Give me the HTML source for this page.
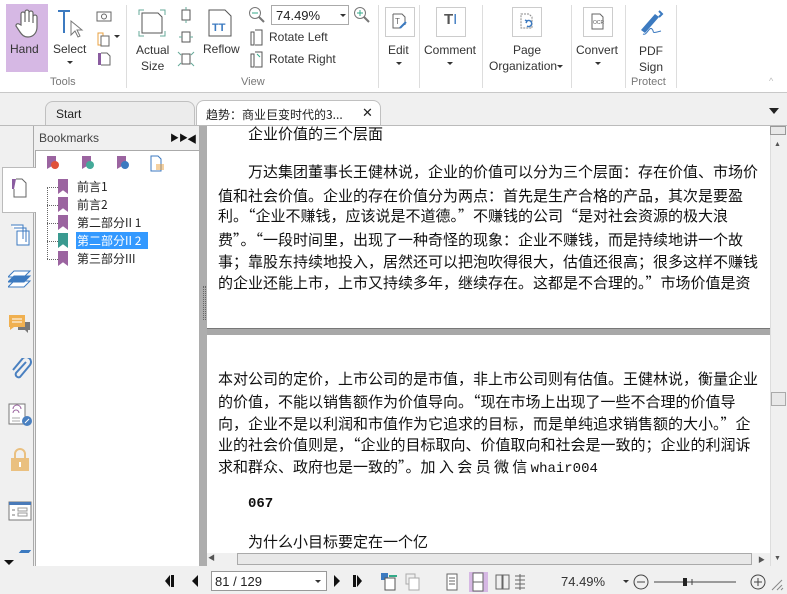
<!DOCTYPE html>
<html><head><meta charset="utf-8"><style>
*{margin:0;padding:0;box-sizing:border-box}
body{width:787px;height:594px;overflow:hidden;background:#f0f0f0;font-family:"Liberation Sans","Noto Sans CJK SC",sans-serif;font-size:12px;color:#222;position:relative}
.a{position:absolute}
.lbl{position:absolute;font-size:12px;color:#333;text-align:center;white-space:nowrap}
.grp{position:absolute;top:76px;font-size:11px;color:#777}
.sep{position:absolute;top:5px;width:1px;height:83px;background:#ddd}
.tx{position:absolute;left:218px;font-size:15px;white-space:nowrap;color:#111;font-family:"Noto Sans CJK SC","WenQuanYi Zen Hei",sans-serif;line-height:20px}
.box{position:absolute;width:30px;height:30px;border:1px solid #ccc;background:#fff}
.tri{position:absolute;width:0;height:0;border-left:3px solid transparent;border-right:3px solid transparent;border-top:3px solid #333}
.bm{position:absolute;left:58px;width:10px;height:15px;background:#9b64a0;clip-path:polygon(0 0,100% 0,100% 100%,50% 75%,0 100%)}
.bt{position:absolute;left:77px;font-size:12px;font-family:"Noto Sans CJK SC",sans-serif;line-height:16px}
</style></head><body>
<div class="a" style="left:0;top:0;width:787px;height:93px;background:#fff;border-bottom:1px solid #c8c8c8"></div>
<div class="a" style="left:6px;top:4px;width:42px;height:68px;background:#d6b8e4"></div>
<svg class="a" style="left:14px;top:8px" width="26" height="30" viewBox="0 0 26 30"><path d="M7 17V6a2 2 0 0 1 4 0v8V4a2 2 0 0 1 4 0v10V5a2 2 0 0 1 4 0v10V9a2 2 0 0 1 4 0v10c0 6-4 10-9 10-4 0-6-2-8-5l-4-6a2 2 0 0 1 3-2z" fill="#fff" stroke="#666" stroke-width="1.2"/></svg>
<div class="lbl" style="left:10px;top:42px">Hand</div>
<svg class="a" style="left:56px;top:9px" width="30" height="30"><path d="M2 2h12M8 2v22" stroke="#3c7ac0" stroke-width="2" fill="none"/><path d="M15 12l0 14 4-4 3 6 2-1-3-6 5 0z" fill="#fff" stroke="#777"/></svg>
<div class="lbl" style="left:53px;top:42px">Select</div><div class="tri" style="left:67px;top:61px"></div>
<svg class="a" style="left:95px;top:9px" width="18" height="60"><rect x="2" y="3" width="14" height="9" fill="none" stroke="#666"/><circle cx="9" cy="7.5" r="2.5" fill="none" stroke="#666"/><rect x="3" y="24" width="5" height="12" fill="none" stroke="#e8a040"/><rect x="6" y="27" width="8" height="10" fill="#fff" stroke="#666"/><rect x="3" y="44" width="3" height="12" fill="#8a5ca0"/><path d="M6 44h6l3 3v9H6" fill="#fff" stroke="#666"/></svg>
<div class="tri" style="left:114px;top:35px"></div>
<div class="grp" style="left:50px">Tools</div>
<div class="sep" style="left:126px"></div>
<svg class="a" style="left:137px;top:8px" width="30" height="30"><path d="M2 7V2h5M23 2h5v5M28 23v5h-5M7 28H2v-5" stroke="#6a9" fill="none"/><path d="M5 5h16l4 4v16H5z" fill="#fff" stroke="#555"/></svg>
<div class="lbl" style="left:136px;top:42px;line-height:16px">Actual<br>Size</div>
<svg class="a" style="left:177px;top:7px" width="18" height="60"><rect x="5" y="3" width="8" height="10" fill="none" stroke="#555"/><path d="M9 0v3M9 13v3" stroke="#6a9"/><rect x="5" y="25" width="8" height="10" fill="none" stroke="#555"/><path d="M2 30h3M13 30h3" stroke="#6a9"/><rect x="5" y="47" width="8" height="10" fill="none" stroke="#555"/><path d="M1 45l3 3M17 45l-3 3M1 59l3-3M17 59l-3-3" stroke="#6a9"/></svg>
<svg class="a" style="left:208px;top:9px" width="24" height="28"><path d="M1 1h16l6 6v20H1z" fill="#fff" stroke="#555"/><text x="4" y="22" font-size="11" font-weight="bold" fill="#3c7ac0" font-family="Liberation Sans">TT</text></svg>
<div class="lbl" style="left:203px;top:42px">Reflow</div>
<svg class="a" style="left:248px;top:6px" width="18" height="18"><circle cx="7" cy="7" r="5.5" fill="none" stroke="#777"/><path d="M4 7h6" stroke="#3a8"/><path d="M11 11l5 5" stroke="#777" stroke-width="2"/></svg>
<div class="a" style="left:271px;top:5px;width:78px;height:20px;border:1px solid #aaa;background:#fff;font-size:13px;padding:2px 0 0 4px">74.49%</div>
<div class="tri" style="left:340px;top:14px"></div>
<svg class="a" style="left:353px;top:6px" width="18" height="18"><circle cx="7" cy="7" r="5.5" fill="none" stroke="#777"/><path d="M4 7h6M7 4v6" stroke="#3a8"/><path d="M11 11l5 5" stroke="#777" stroke-width="2"/></svg>
<svg class="a" style="left:249px;top:28px" width="16" height="40"><path d="M2 4h3v13H2zM6 2h7v15H6" fill="none" stroke="#555"/><path d="M2 26h3v13H2zM6 24h7v15H6" fill="none" stroke="#555"/><path d="M8 26l3 3" stroke="#3a8"/></svg>
<div class="lbl" style="left:269px;top:30px">Rotate Left</div>
<div class="lbl" style="left:269px;top:52px">Rotate Right</div>
<div class="grp" style="left:241px">View</div>
<div class="sep" style="left:378px"></div>
<div class="box" style="left:385px;top:7px"></div>
<svg class="a" style="left:391px;top:13px" width="18" height="18"><path d="M2 1h9l3 3v8M2 1v14h7" fill="none" stroke="#666"/><text x="4" y="11" font-size="8" fill="#666">T</text><path d="M9 15l6-6" stroke="#3c7ac0" stroke-width="2"/></svg>
<div class="lbl" style="left:388px;top:43px">Edit</div><div class="tri" style="left:396px;top:62px"></div>
<div class="sep" style="left:419px"></div>
<div class="box" style="left:436px;top:7px"></div>
<div class="a" style="left:444px;top:11px;font-size:15px;font-weight:bold;color:#555">T<span style="color:#3c7ac0;font-weight:normal">I</span></div>
<div class="lbl" style="left:424px;top:43px">Comment</div><div class="tri" style="left:447px;top:62px"></div>
<div class="sep" style="left:482px"></div>
<div class="box" style="left:512px;top:7px"></div>
<svg class="a" style="left:519px;top:13px" width="18" height="18"><path d="M2 1h8l3 3v11H2z" fill="none" stroke="#888" stroke-dasharray="2 1"/><path d="M8 8a3 3 0 1 1 0 5M6 7l2 1-1 2" fill="none" stroke="#3c7ac0" stroke-width="1.5"/></svg>
<div class="lbl" style="left:513px;top:43px">Page</div>
<div class="lbl" style="left:489px;top:59px">Organization</div><div class="tri" style="left:557px;top:65px"></div>
<div class="sep" style="left:571px"></div>
<div class="box" style="left:583px;top:7px"></div>
<svg class="a" style="left:590px;top:13px" width="16" height="18"><path d="M2 1h8l3 3v12H2z" fill="none" stroke="#666"/><text x="3" y="11" font-size="5" fill="#555">OCR</text></svg>
<div class="lbl" style="left:576px;top:43px">Convert</div><div class="tri" style="left:595px;top:62px"></div>
<div class="sep" style="left:625px"></div>
<svg class="a" style="left:635px;top:8px" width="30" height="30"><path d="M6 22L20 6l4 3L10 25z" fill="#3c7ac0"/><path d="M24 3l3 3-3 3" stroke="#3c7ac0" fill="none" stroke-width="2"/><path d="M8 26c4 2 6-8 9-5s-2 5 9 2" fill="none" stroke="#3c7ac0"/></svg>
<div class="lbl" style="left:639px;top:43px;line-height:16px">PDF<br>Sign</div>
<div class="grp" style="left:631px">Protect</div>
<div class="sep" style="left:676px"></div>
<div class="a" style="left:769px;top:76px;font-size:9px;color:#bbb">^</div>
<div class="a" style="left:45px;top:101px;width:150px;height:24px;border:1px solid #c0c0c0;border-bottom:none;border-radius:8px 8px 0 0;background:#ececec"></div>
<div class="a" style="left:56px;top:107px;font-size:12px">Start</div>
<div class="a" style="left:196px;top:100px;width:185px;height:26px;border:1px solid #c0c0c0;border-bottom:none;border-radius:8px 8px 0 0;background:#fff"></div>
<div class="a" style="left:206px;top:107px;font-size:12px;font-family:'Noto Sans CJK SC',sans-serif;line-height:15px">趋势：商业巨变时代的3...</div>
<div class="a" style="left:362px;top:105px;font-size:13px">✕</div>
<div class="a" style="left:769px;top:108px;border-left:5px solid transparent;border-right:5px solid transparent;border-top:6px solid #222"></div>
<div class="a" style="left:0;top:125px;width:787px;height:1px;background:#bbb"></div>
<div class="a" style="left:0;top:126px;width:34px;height:440px;background:#f0f0f0;border-right:1px solid #aaa"></div>
<div class="a" style="left:2px;top:167px;width:34px;height:46px;background:#fff;border:1px solid #bbb;border-right:none"></div>
<svg class="a" style="left:10px;top:177px" width="20" height="24"><rect x="2" y="2" width="4" height="10" fill="#8a5ca0"/><path d="M6 2h6l4 4v14H4V12" fill="#fff" stroke="#666"/></svg>
<svg class="a" style="left:9px;top:223px" width="22" height="24"><path d="M2 2h12v14M5 5h12v14M8 8h12v14H8z" fill="#fff" stroke="#3c7ac0"/></svg>
<svg class="a" style="left:8px;top:270px" width="24" height="20"><path d="M6 1h16l-6 6H0zM6 6h16l-6 6H0zM6 11h16l-6 6H0z" fill="#fff" stroke="#3c7ac0"/><path d="M6 6h16l-6 6H0z" fill="#3c7ac0"/></svg>
<svg class="a" style="left:8px;top:314px" width="24" height="22"><path d="M1 1h16v12H6l-4 3v-3H1z" fill="#f0b050"/><path d="M4 5h10M4 8h10" stroke="#fff"/><path d="M17 8h5v8h-2v3l-3-3h-7v-3h7z" fill="#777"/></svg>
<svg class="a" style="left:10px;top:358px" width="22" height="24"><path d="M16 4l-10 11a3 3 0 0 0 4 4l10-12a5 5 0 0 0-7-7L3 12" fill="none" stroke="#4a80c0" stroke-width="2"/></svg>
<svg class="a" style="left:8px;top:403px" width="24" height="24"><rect x="1" y="1" width="16" height="20" fill="#fff" stroke="#777"/><path d="M5 6a4 4 0 0 1 8 0M5 10a3 3 0 0 1 6 0" stroke="#9b64a0" fill="none"/><path d="M4 15h8M4 18h8" stroke="#aaa"/><circle cx="19" cy="18" r="5" fill="#4a80c0"/><path d="M17 20l4-4" stroke="#fff"/></svg>
<svg class="a" style="left:10px;top:448px" width="20" height="24"><path d="M5 10V6a5 5 0 0 1 10 0v4" fill="none" stroke="#eac080" stroke-width="2"/><rect x="1" y="10" width="18" height="13" fill="#eac080"/><rect x="9" y="14" width="2" height="5" fill="#fff"/></svg>
<svg class="a" style="left:8px;top:501px" width="24" height="20"><rect x="1" y="1" width="22" height="18" fill="#fff" stroke="#777"/><rect x="1" y="1" width="22" height="3" fill="#4a7ab8"/><path d="M4 9h3M4 14h3" stroke="#777"/><rect x="10" y="7" width="9" height="3" fill="none" stroke="#999"/><rect x="10" y="12" width="9" height="3" fill="none" stroke="#999"/></svg>
<div class="a" style="left:20px;top:550px;width:10px;height:3px;background:#3c7ac0;transform:skewX(-40deg)"></div>
<div class="a" style="left:4px;top:560px;border-left:5px solid transparent;border-right:5px solid transparent;border-top:5px solid #111"></div>
<div class="a" style="left:39px;top:131px;font-size:12px;color:#444">Bookmarks</div>
<div class="a" style="left:170px;top:131px;font-size:9px;color:#111">▶▶</div>
<div class="a" style="left:187px;top:131px;font-size:10px;color:#111">◀</div>
<div class="a" style="left:35px;top:150px;width:164px;height:416px;background:#fff;border-left:1px solid #aaa;border-top:1px solid #aaa"></div>
<div class="a" style="left:34px;top:168px;width:3px;height:44px;background:#fff"></div>
<svg class="a" style="left:45px;top:155px" width="125" height="18"><g><path d="M2 1h9v13l-4-3-5 3z" fill="#9b64a0"/><circle cx="10" cy="10" r="4" fill="#e0523a"/></g><g transform="translate(35 0)"><path d="M2 1h9v13l-4-3-5 3z" fill="#9b64a0"/><circle cx="10" cy="10" r="4" fill="#4a9"/></g><g transform="translate(70 0)"><path d="M2 1h9v13l-4-3-5 3z" fill="#9b64a0"/><circle cx="10" cy="10" r="4" fill="#3c7ac0"/></g><g transform="translate(105 0)"><path d="M1 1h7l3 3v12H1z" fill="#fff" stroke="#3c7ac0"/><path d="M6 10h8M6 12h8M6 14h8" stroke="#e8a040"/></g></svg>
<div class="a" style="left:47px;top:187px;height:72px;border-left:1px dotted #666"></div>
<div class="a" style="left:47px;top:187px;width:11px;border-top:1px dotted #666"></div>
<div class="a" style="left:47px;top:205px;width:11px;border-top:1px dotted #666"></div>
<div class="a" style="left:47px;top:223px;width:11px;border-top:1px dotted #666"></div>
<div class="a" style="left:47px;top:241px;width:11px;border-top:1px dotted #666"></div>
<div class="a" style="left:47px;top:259px;width:11px;border-top:1px dotted #666"></div>
<div class="bm" style="top:179px"></div><div class="bt" style="top:179px">前言1</div>
<div class="bm" style="top:197px"></div><div class="bt" style="top:197px">前言2</div>
<div class="bm" style="top:215px"></div><div class="bt" style="top:215px">第二部分II 1</div>
<div class="bm" style="top:233px;background:#3a9a90"></div><div class="a" style="left:76px;top:232px;width:72px;height:17px;background:#3399ff"></div><div class="bt" style="top:233px;color:#fff">第二部分II 2</div>
<div class="bm" style="top:251px"></div><div class="bt" style="top:251px">第三部分III</div>
<div class="a" style="left:199px;top:126px;width:8px;height:440px;background:#adadad"></div>
<div class="a" style="left:203px;top:286px;width:3px;height:34px;border-left:1px dotted #666;border-right:1px dotted #666"></div>
<div class="a" style="left:207px;top:126px;width:563px;height:202px;background:#fff"></div>
<div class="a" style="left:207px;top:328px;width:563px;height:7px;background:#a8a8a8;border-top:1px solid #777"></div>
<div class="a" style="left:207px;top:335px;width:563px;height:218px;background:#fff"></div>
<div class="tx" style="left:248px;top:124px">企业价值的三个层面</div>
<div class="tx" style="left:248px;top:162px">万达集团董事长王健林说，企业的价值可以分为三个层面：存在价值、市场价</div>
<div class="tx" style="top:186px">值和社会价值。企业的存在价值分为两点：首先是生产合格的产品，其次是要盈</div>
<div class="tx" style="top:206px">利。“企业不赚钱，应该说是不道德。”不赚钱的公司“是对社会资源的极大浪</div>
<div class="tx" style="top:230px">费”。“一段时间里，出现了一种奇怪的现象：企业不赚钱，而是持续地讲一个故</div>
<div class="tx" style="top:252px">事；靠股东持续地投入，居然还可以把泡吹得很大，估值还很高；很多这样不赚钱</div>
<div class="tx" style="top:273px">的企业还能上市，上市又持续多年，继续存在。这都是不合理的。”市场价值是资</div>
<div class="tx" style="top:369px">本对公司的定价，上市公司的是市值，非上市公司则有估值。王健林说，衡量企业</div>
<div class="tx" style="top:392px">的价值，不能以销售额作为价值导向。“现在市场上出现了一些不合理的价值导</div>
<div class="tx" style="top:414px">向，企业不是以利润和市值作为它追求的目标，而是单纯追求销售额的大小。”企</div>
<div class="tx" style="top:435px">业的社会价值则是，“企业的目标取向、价值取向和社会是一致的；企业的利润诉</div>
<div class="tx" style="top:457px">求和群众、政府也是一致的”。加 入 会 员 微 信 <span style="font-family:'Liberation Mono',monospace;font-size:14px">whair004</span></div>
<div class="tx" style="left:248px;top:494px;font-family:'Liberation Mono',monospace;font-size:14px;font-weight:bold">067</div>
<div class="tx" style="left:248px;top:532px">为什么小目标要定在一个亿</div>
<div class="a" style="left:770px;top:126px;width:17px;height:440px;background:#f0f0f0;border-left:1px solid #ddd"></div>
<div class="a" style="left:770px;top:126px;width:16px;height:9px;border:1px solid #999;background:#e8e8e8"></div>
<div class="a" style="left:774px;top:141px;font-size:7px;color:#555">▲</div>
<div class="a" style="left:771px;top:392px;width:15px;height:14px;border:1px solid #aaa;background:#e8e8e8"></div>
<div class="a" style="left:774px;top:555px;font-size:7px;color:#555">▼</div>
<div class="a" style="left:207px;top:553px;width:563px;height:13px;background:#f0f0f0"></div>
<div class="a" style="left:237px;top:553px;width:515px;height:12px;border:1px solid #aaa;background:#e8e8e8"></div>
<div class="a" style="left:208px;top:553px;font-size:7px;color:#555">◀</div>
<div class="a" style="left:758px;top:555px;font-size:7px;color:#555">▶</div>
<div class="a" style="left:0;top:566px;width:787px;height:28px;background:#f0f0f0"></div>
<svg class="a" style="left:162px;top:573px" width="45" height="16"><path d="M3 8l5-6v12z" fill="#111"/><rect x="9" y="2" width="3" height="12" fill="#111"/><path d="M30 8l6-6v12z" fill="#111"/></svg>
<div class="a" style="left:211px;top:571px;width:116px;height:20px;border:1px solid #999;background:#fff;font-size:13px;padding:2px 0 0 3px">81 / 129</div>
<div class="tri" style="left:315px;top:580px"></div>
<svg class="a" style="left:332px;top:573px" width="45" height="16"><path d="M2 2l6 6-6 6z" fill="#111"/><rect x="21" y="2" width="3" height="12" fill="#111"/><path d="M25 2l5 6-5 6z" fill="#111"/></svg>
<svg class="a" style="left:380px;top:572px" width="50" height="20"><rect x="1" y="1" width="7" height="7" fill="#3c7ac0"/><rect x="5" y="6" width="10" height="12" fill="#fff" stroke="#555"/><path d="M9 4h8" stroke="#3a8" stroke-width="2"/><rect x="26" y="2" width="9" height="10" fill="none" stroke="#aaa"/><rect x="29" y="6" width="10" height="12" fill="#fff" stroke="#aaa"/></svg>
<svg class="a" style="left:444px;top:572px" width="100" height="20"><rect x="3" y="2" width="10" height="16" fill="#fff" stroke="#666"/><path d="M5 6h6M5 9h6M5 12h6" stroke="#666"/><rect x="25" y="0" width="19" height="20" fill="#d6b8e4"/><rect x="29" y="1" width="10" height="18" fill="#fff" stroke="#666"/><path d="M29 10h10" stroke="#666"/><rect x="52" y="3" width="6" height="14" fill="none" stroke="#666"/><rect x="59" y="3" width="6" height="14" fill="none" stroke="#666"/><path d="M76 2v16M71 4h10M71 8h10M71 12h10M71 16h10" stroke="#666"/></svg>
<div class="a" style="left:561px;top:574px;font-size:13px;color:#333">74.49%</div>
<div class="tri" style="left:623px;top:580px"></div>
<svg class="a" style="left:632px;top:572px" width="155" height="20"><circle cx="9" cy="10" r="7" fill="none" stroke="#444"/><path d="M5 10h8" stroke="#444"/><path d="M22 10h82" stroke="#444"/><rect x="51" y="6" width="4" height="8" fill="#222"/><path d="M60 7v6" stroke="#444"/><circle cx="126" cy="10" r="7" fill="none" stroke="#444"/><path d="M122 10h8M126 6v8" stroke="#444"/><path d="M140 18l10-10M145 18l5-5M149 18l2-2" stroke="#888"/></svg>
</body></html>
